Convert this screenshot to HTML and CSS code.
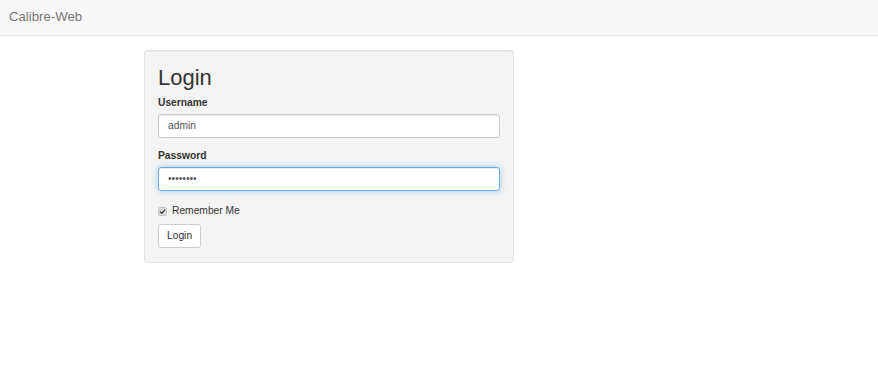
FILE: index.html
```html
<!DOCTYPE html>
<html>
<head>
<meta charset="utf-8">
<title>Calibre-Web | Login</title>
<link rel="stylesheet" href="styles.css">
</head>
<body>
<nav class="navbar">
  <a class="brand" href="#">Calibre-Web</a>
</nav>
<main class="container">
  <div class="well">
    <h2 class="title">Login</h2>
    <form class="form">
      <div class="group">
        <label class="label" for="username">Username</label>
        <input class="input" id="username" type="text" value="admin">
      </div>
      <div class="group">
        <label class="label" for="password">Password</label>
        <input class="input input-focus" id="password" type="password" value="admin123">
      </div>
      <label class="check">
        <span class="box"><svg viewBox="0 0 10 10" width="7" height="7"><path d="M1.5 5.2 L4 7.6 L8.6 2.2" fill="none" stroke="#333" stroke-width="1.8"/></svg></span>
        <span>Remember Me</span>
      </label>
      <div class="actions">
        <button class="btn" type="button">Login</button>
      </div>
    </form>
  </div>
</main>
</body>
</html>
```
FILE: styles.css
```css
* { box-sizing: border-box; }
html, body {
  margin: 0;
  padding: 0;
  background: #fff;
  font-family: "Liberation Sans", Arial, Helvetica, sans-serif;
  font-size: 10.25px;
  line-height: 1.43;
  color: #333;
}
.navbar {
  height: 36px;
  background: #f8f8f8;
  border-bottom: 1px solid #e7e7e7;
  display: flex;
  align-items: center;
  padding-left: 9px;
}
.brand {
  color: #777;
  font-size: 13.2px;
  text-decoration: none;
  line-height: 1;
  margin-top: -1px;
}
.container {
  padding: 14px 0 0 144px;
}
.well {
  width: 370px;
  background: #f4f4f4;
  border: 1px solid #e3e3e3;
  border-radius: 3px;
  box-shadow: inset 0 1px 1px rgba(0,0,0,0.05);
  padding: 13px 13px 14px 13px;
}
.title {
  margin: 0;
  font-size: 22px;
  font-weight: 500;
  line-height: 1.1;
  color: #333;
  padding-top: 2px;
}
.form { margin-top: 6px; }
.group { margin-bottom: 11px; }
.label {
  display: block;
  font-weight: bold;
  margin-bottom: 3px;
}
.input {
  display: block;
  width: 100%;
  height: 24px;
  padding: 4px 9px;
  font-family: inherit;
  font-size: 10.25px;
  color: #555;
  background: #fff;
  border: 1px solid #ccc;
  border-radius: 3px;
  box-shadow: inset 0 1px 1px rgba(0,0,0,0.075);
  outline: none;
}
.input-focus {
  border-color: #66afe9;
  box-shadow: inset 0 1px 1px rgba(0,0,0,0.075), 0 0 6px rgba(102,175,233,0.6);
}
.check {
  display: flex;
  align-items: center;
  gap: 5px;
  margin-top: 13px;
  height: 15px;
}
.box {
  width: 9px;
  height: 9px;
  background: #dcdcdc;
  border: 1px solid #c4c4c4;
  border-radius: 2px;
  display: flex;
  align-items: center;
  justify-content: center;
}
.box svg { display: block; }
.actions { margin-top: 5px; }
.btn {
  height: 24px;
  padding: 0 8px;
  font-family: inherit;
  font-size: 10.25px;
  color: #333;
  background: #fff;
  border: 1px solid #ccc;
  border-radius: 3px;
}
```
